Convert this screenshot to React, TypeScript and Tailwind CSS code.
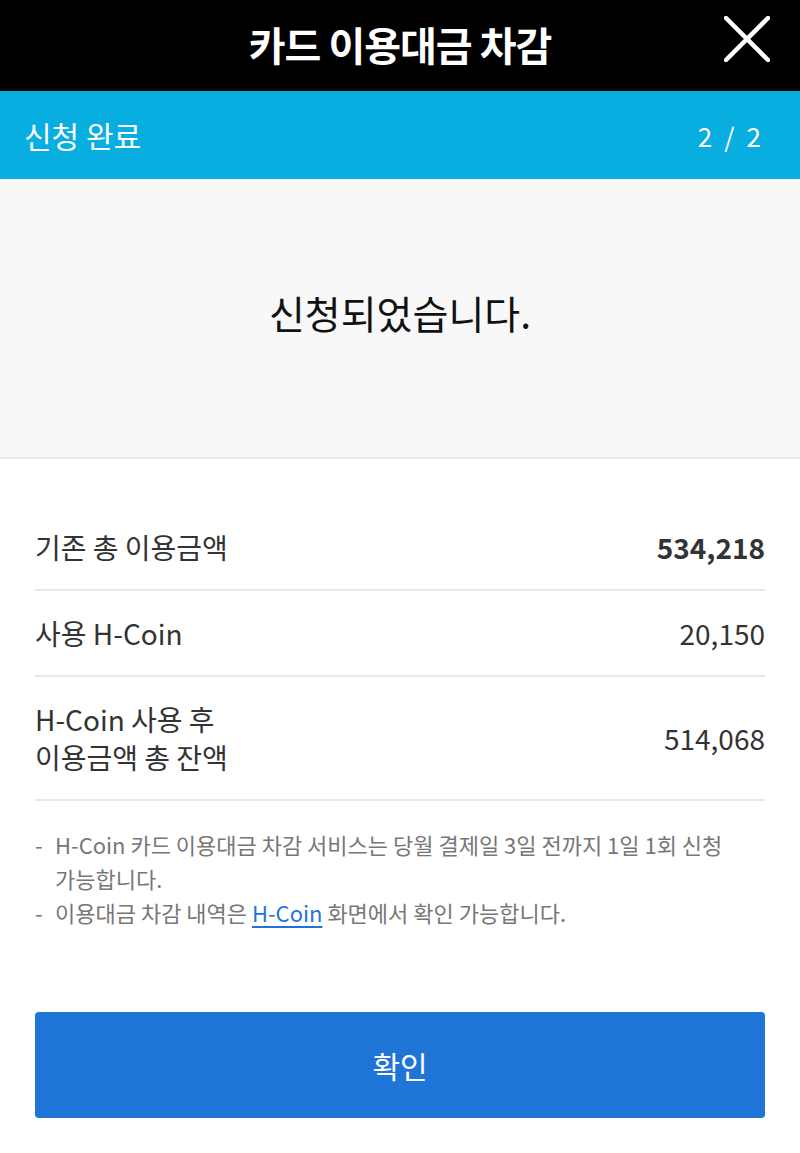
import React from 'react';

const rows = [
  { label: ['기존 총 이용금액'], value: '534,218', bold: true },
  { label: ['사용 H-Coin'], value: '20,150' },
  { label: ['H-Coin 사용 후', '이용금액 총 잔액'], value: '514,068' },
];

export default function App() {
  return (
    <div
      className="w-[800px] h-[1153px] bg-white flex flex-col"
      style={{ fontFamily: '"Noto Sans CJK KR", "Noto Sans", sans-serif' }}
    >
      {/* title bar */}
      <header className="h-[91px] bg-black relative flex items-center justify-center shrink-0">
        <h1 className="text-white text-[40px] font-bold tracking-tight pb-[4px]">카드 이용대금 차감</h1>
        <button className="absolute right-[30px] top-[16px] w-[46px] h-[46px]">
          <svg viewBox="0 0 46 46" className="w-full h-full">
            <path d="M2 2 L44 44 M44 2 L2 44" stroke="white" strokeWidth="4.5" strokeLinecap="round" />
          </svg>
        </button>
      </header>

      {/* step bar */}
      <div className="h-[88px] bg-[#08aedf] flex items-center justify-between pl-[24px] pr-[36px] shrink-0">
        <span className="text-white text-[30px]">신청 완료</span>
        <span className="text-white text-[26px] tracking-[0.12em]">2 / 2</span>
      </div>

      {/* done message */}
      <div className="h-[280px] bg-[#f8f8f8] border-b-2 border-[#e8e8e8] flex items-center justify-center shrink-0">
        <p className="text-[39px] text-[#111] pb-[12px]">신청되었습니다.</p>
      </div>

      <div className="px-[35px] pt-[46px]">
        {rows.map((r, i) => (
          <div
            key={i}
            className={`flex items-center justify-between border-b-2 border-[#e8e8e8] ${
              r.label.length > 1 ? 'h-[124px]' : 'h-[86px]'
            }`}
          >
            <div className="text-[28px] text-[#333] leading-[38px]">
              {r.label.map((l) => (
                <div key={l}>{l}</div>
              ))}
            </div>
            <span className={`text-[28px] text-[#333] ${r.bold ? 'font-bold' : ''}`}>{r.value}</span>
          </div>
        ))}

        <ul className="mt-[26px] text-[22px] text-[#777] leading-[34px] break-keep">
          <li className="flex">
            <span className="w-[20px] shrink-0">-</span>
            <span>H-Coin 카드 이용대금 차감 서비스는 당월 결제일 3일 전까지 1일 1회 신청 가능합니다.</span>
          </li>
          <li className="flex">
            <span className="w-[20px] shrink-0">-</span>
            <span>
              이용대금 차감 내역은 <a className="text-[#1f75d6] underline underline-offset-4">H-Coin</a> 화면에서 확인 가능합니다.
            </span>
          </li>
        </ul>

        <button className="mt-[83px] w-full h-[106px] bg-[#1f75d6] rounded-[4px] text-white text-[30px]">
          확인
        </button>
      </div>
    </div>
  );
}
